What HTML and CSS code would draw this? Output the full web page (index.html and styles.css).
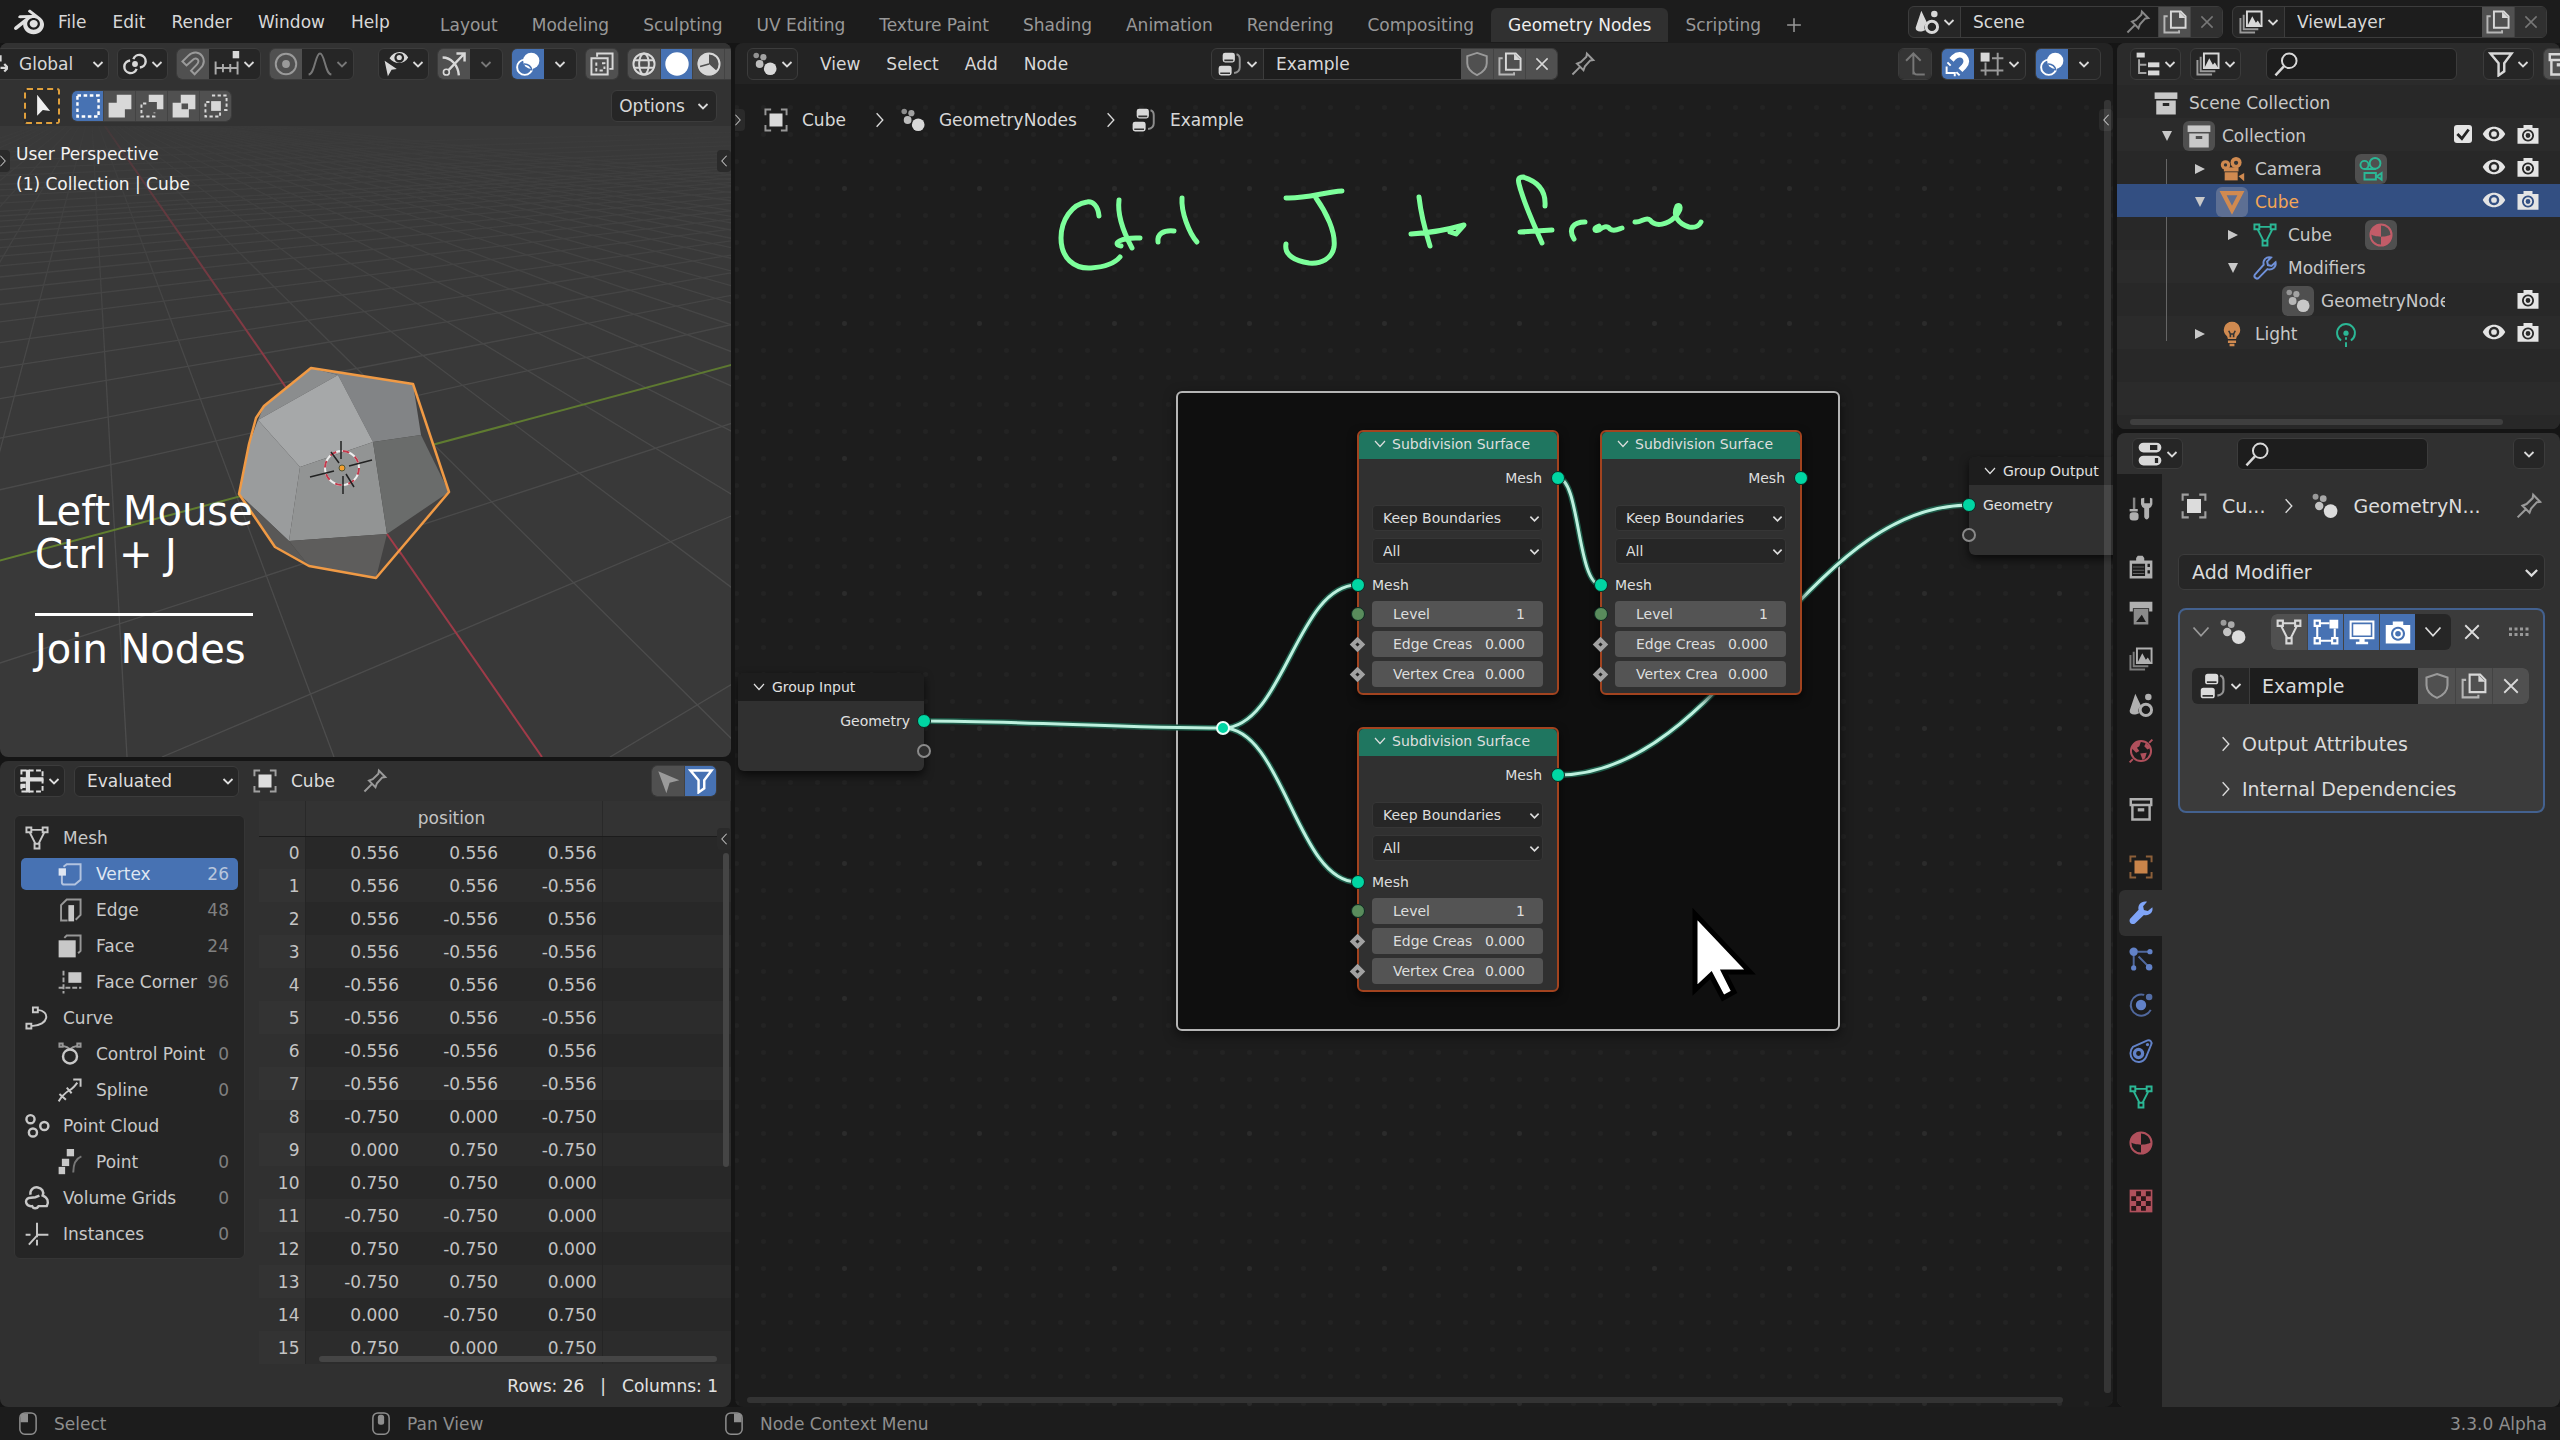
FILE: index.html
```html
<!DOCTYPE html>
<html lang="en">
<head>
<meta charset="utf-8">
<title>Blender</title>
<link rel="stylesheet" href="styles.css">
</head>
<body>
<svg class="defs" aria-hidden="true">
  <symbol id="blender" viewBox="0 0 24 24"><path fill="currentColor" d="M12.51 13.214c.046-.8.438-1.506 1.03-2.006a3.424 3.424 0 0 1 2.212-.79c.85 0 1.631.3 2.211.79.592.5.983 1.206 1.028 2.005.045.823-.285 1.586-.865 2.153a3.389 3.389 0 0 1-2.374.938 3.393 3.393 0 0 1-2.376-.938c-.58-.567-.91-1.33-.865-2.152M7.35 14.831c.006.314.106.922.256 1.398a7.372 7.372 0 0 0 1.593 2.757 8.227 8.227 0 0 0 2.787 2.001 8.947 8.947 0 0 0 3.66.76 8.964 8.964 0 0 0 3.657-.772 8.285 8.285 0 0 0 2.785-2.01 7.428 7.428 0 0 0 1.592-2.762 6.964 6.964 0 0 0 .25-3.074 7.123 7.123 0 0 0-1.016-2.779 7.764 7.764 0 0 0-1.852-2.043h.002L13.566 2.55l-.02-.015c-.492-.378-1.319-.376-1.86.002-.547.382-.609 1.015-.123 1.415l-.001.001 3.126 2.543-9.53.01h-.013c-.788.001-1.545.518-1.695 1.172-.154.665.38 1.217 1.2 1.22V8.9l4.83-.01-8.62 6.617-.034.025c-.813.622-1.075 1.658-.563 2.313.52.667 1.625.668 2.447.004L7.414 14s-.069.52-.063.831zm12.09 1.741c-.97.988-2.326 1.548-3.795 1.55-1.47.004-2.827-.552-3.797-1.538a4.51 4.51 0 0 1-1.036-1.622 4.282 4.282 0 0 1 .282-3.519 4.702 4.702 0 0 1 1.153-1.371c.942-.768 2.141-1.183 3.396-1.185 1.256-.002 2.455.41 3.398 1.175.48.391.87.854 1.152 1.367a4.28 4.28 0 0 1 .522 1.706 4.236 4.236 0 0 1-.239 1.811 4.54 4.54 0 0 1-1.035 1.626"/></symbol>
  <symbol id="chev" viewBox="0 0 12 12"><path class="ln w2" d="M1.500 4l4.500 4.500L10.500 4"/></symbol>
  <symbol id="thin" viewBox="0 0 12 12"><path class="ln" d="M1 3l5 5.500L11 3"/></symbol>
  <symbol id="right" viewBox="0 0 12 16"><path class="ln" d="M3 2l5.500 6L3 14"/></symbol>
  <symbol id="left" viewBox="0 0 12 16"><path class="ln" d="M9 2L3.500 8 9 14"/></symbol>
  <symbol id="geo" viewBox="0 0 16 16"><g fill="currentColor"><circle cx="2.600" cy="2.700" r="1.700" opacity=".6"/><circle cx="7" cy="3.800" r="1.900" opacity=".7"/><circle cx="4.700" cy="8" r="2.400" opacity=".85"/><circle cx="11.200" cy="10.900" r="3.900"/></g></symbol>
  <symbol id="tree" viewBox="0 0 16 16"><rect x="3.500" y="1" width="7.500" height="6" rx="1.500" fill="currentColor"/><rect x="1" y="9" width="8" height="6" rx="1.500" fill="currentColor"/><path d="M4.500 5.800h5.500M2 13.700h6" stroke="#333" fill="none"/><path class="ln" opacity=".6" d="M12 2q2 .5 2 3v5q0 3-3.500 3.500"/></symbol>
  <symbol id="obj" viewBox="0 0 16 16"><rect x="4" y="4" width="8" height="8" fill="currentColor"/><path class="ln" opacity=".65" d="M1.500 5V1.500H5M11 1.500h3.500V5M14.500 11v3.500H11M5 14.500H1.500V11"/></symbol>
  <symbol id="pin" viewBox="0 0 16 16"><path class="ln" d="M1.500 14.500l4.700-4.700M4.300 7.800l4 4 .9-2.400 3.300-3.600 1.800-.2-3.900-4-.3 1.900-3.500 3.400z"/></symbol>
  <symbol id="shield" viewBox="0 0 16 16"><path class="ln" d="M8 1.200l6 2v4.300c0 3.500-2.500 5.700-6 7.300-3.500-1.600-6-3.800-6-7.300V3.200z"/></symbol>
  <symbol id="copy" viewBox="0 0 16 16"><path class="ln" opacity=".75" d="M3.500 4.500H1.500v10h9v-1.500"/><path class="ln" d="M5.500 1.500h6l3 3v7h-9z"/><path fill="currentColor" d="M10.500 1.500l4 4h-4z"/></symbol>
  <symbol id="x" viewBox="0 0 16 16"><path class="ln" d="M3.500 3.500l9 9M12.500 3.500l-9 9"/></symbol>
  <symbol id="plus" viewBox="0 0 16 16"><path class="ln" d="M8 2.500v11M2.500 8h11"/></symbol>
  <symbol id="scene" viewBox="0 0 16 16"><path fill="currentColor" d="M4.500 1L8 8.500C6.500 9.500 6 11.500 6.800 13 4 14.500 1 14 1 11.500z"/><circle cx="12.500" cy="3" r="2" fill="currentColor"/><circle cx="11" cy="11" r="3.500" class="ln w2"/></symbol>
  <symbol id="vlayer" viewBox="0 0 16 16"><path class="ln" d="M5.500 1.500h9v9h-9z"/><path fill="currentColor" d="M6 10l2.800-5.500L11 8.500l1.200-1.500L14 10z"/><path class="ln" opacity=".65" d="M3.500 3.500v9h9M1.500 5.500v9h9"/></symbol>
  <symbol id="link" viewBox="0 0 16 16"><circle cx="8" cy="8" r="1.800" fill="currentColor"/><path class="ln w15" d="M7 5a3.900 3.900 0 1 1 4 5.200M9 11a3.900 3.900 0 1 1-4-5.200"/></symbol>
  <symbol id="magnet" viewBox="0 0 16 16"><path class="ln" d="M1.500 6.500L5 3c3-3 7-2.500 8.700.3 1.700 2.700 1 5.200-1.200 7.400L9 14.300l-2.200-2.200 3.500-3.700c1.200-1.300 1.300-2.600.5-3.300-.9-.8-2-.6-3 .4L4 8.900z"/></symbol>
  <symbol id="magneton" viewBox="0 0 16 16"><path fill="none" stroke="currentColor" stroke-width="3.400" d="M4 5.500l1.500-1.700c2-2 5-2 6.500-.2s1.400 4-.4 6L9.500 11.800"/><path class="ln" d="M1 9.500v4h5v2M1.500 7l2 2M7 13l2 2"/></symbol>
  <symbol id="snapinc" viewBox="0 0 16 16"><rect x="11.500" y="0" width="4" height="4.500" fill="currentColor"/><path class="ln" opacity=".75" d="M1 6.500v8M14.500 6.500v8M5.500 8v5M10 8v5M1 10.500h13.500"/></symbol>
  <symbol id="snapgrid" viewBox="0 0 16 16"><rect x="1" y="1" width="5.500" height="5.500" fill="currentColor"/><path class="ln" opacity=".65" d="M4 7v8M11.500 1v14M8 4.500h7M1 12h14"/></symbol>
  <symbol id="prop" viewBox="0 0 16 16"><circle cx="8" cy="8" r="6.300" class="ln"/><circle cx="8" cy="8" r="2.400" fill="currentColor"/></symbol>
  <symbol id="fall" viewBox="0 0 16 16"><path class="ln" d="M1 14.500C5 14 5 1.500 8 1.500S11 14 15 14.500"/></symbol>
  <symbol id="vis" viewBox="0 0 16 16"><path fill="currentColor" fill-rule="evenodd" d="M4 4.500C7-.5 13-.5 15.500 4 13 8.500 7 8.500 4 4.500zM10 1.200a3 3 0 1 0 .01 0z"/><circle cx="10" cy="4" r="1.600" fill="currentColor"/><path fill="currentColor" d="M1 6l7.500 5-3.200.5L3 15.500z"/></symbol>
  <symbol id="gizmo" viewBox="0 0 16 16"><path class="ln w15" d="M3.500 13L14 2M9.500 1.500h5v5M1 4c5 0 9.500 4.500 10 11"/><circle cx="3.300" cy="13" r="1.800" fill="#4a4a4a" class="lns"/></symbol>
  <symbol id="over" viewBox="0 0 16 16"><circle cx="10" cy="6" r="5" fill="currentColor"/><circle cx="6" cy="10" r="4.700" class="ln"/><path d="M5.500 8a4.700 4.700 0 0 1 5 4" fill="none" stroke="#4772b3"/></symbol>
  <symbol id="xray" viewBox="0 0 16 16"><path class="ln" d="M5 3.500V1.500h9.500V11h-2"/><path class="ln" d="M1.500 4.500h10v10h-10z"/><path class="ln" stroke-dasharray="2 1.500" d="M4.500 7v5h5M8 7.500h1.500V11"/></symbol>
  <symbol id="wire" viewBox="0 0 16 16"><circle cx="8" cy="8" r="6.500" class="ln"/><ellipse cx="8" cy="8" rx="3" ry="6.500" class="ln"/><path class="ln" d="M2 5.700h12M2 10.300h12"/></symbol>
  <symbol id="solid" viewBox="0 0 16 16"><circle cx="8" cy="8" r="7.200" fill="currentColor"/></symbol>
  <symbol id="mat" viewBox="0 0 16 16"><circle cx="8" cy="8" r="6.500" class="ln"/><path fill="currentColor" d="M8 1.500V9C5 9 2.500 8 1.500 7.500 2 4 4.500 1.500 8 1.500zM8 9c3 0 5.500-1 6.500-1.500C14.500 12 11 14.500 8 14.500z"/></symbol>
  <symbol id="shade" viewBox="0 0 16 16"><circle cx="8" cy="8" r="6.500" class="ln"/><path fill="currentColor" d="M8 1.500V8l5 4.500A6.500 6.500 0 0 1 3 12.500 6.500 6.500 0 0 1 8 1.500z"/><path d="M8 8l-5.500 1.500" stroke="#505050"/></symbol>
  <symbol id="s1" viewBox="0 0 16 16"><path class="ln w15" stroke-dasharray="2.200 1.600" d="M1.500 1.500h13v13h-13z"/></symbol>
  <symbol id="s2" viewBox="0 0 16 16"><path fill="currentColor" d="M6 1h9v9h-4v5H1V6h5z"/></symbol>
  <symbol id="s3" viewBox="0 0 16 16"><path fill="currentColor" d="M6 1h9v9h-4V5.500H6z"/><path class="ln" stroke-dasharray="2 1.500" d="M4.500 6.500h-3v8h8V12"/></symbol>
  <symbol id="s4" viewBox="0 0 16 16"><path fill="currentColor" fill-rule="evenodd" d="M6 1h9v9h-4v5H1V6h5zM6.500 6.500v3.500h4V6.500z"/></symbol>
  <symbol id="s5" viewBox="0 0 16 16"><rect x="5" y="5" width="6" height="6" fill="currentColor"/><path class="ln" stroke-dasharray="2 1.500" d="M5.500 1.500h9v9h-3M4 5.500H1.500v9h9V12"/></symbol>
  <symbol id="cursor" viewBox="0 0 16 16"><path fill="currentColor" d="M5 1l8 10-4.500-.5L5 14z"/></symbol>
  <symbol id="arrow" viewBox="0 0 16 16"><path fill="currentColor" d="M2 2l13 5.500-6 1.500-2 6.500z"/></symbol>
  <symbol id="up" viewBox="0 0 16 16"><path class="ln" d="M7 14.500V1.500M2.500 6L7 1.500 11.500 6M7 12q0 2.500 2.500 2.500H14"/></symbol>
  <symbol id="outl" viewBox="0 0 16 16"><g fill="currentColor"><rect x="1" y="1" width="5" height="3"/><rect x="8" y="7" width="7" height="3"/><rect x="8" y="12" width="7" height="3"/></g><path class="ln" opacity=".7" d="M2.500 5v8.500H7M2.500 8.500H7"/></symbol>
  <symbol id="search" viewBox="0 0 16 16"><circle cx="10" cy="6" r="4.500" class="ln"/><path class="ln w15" d="M6.700 9.500L1.500 15"/></symbol>
  <symbol id="filter" viewBox="0 0 16 16"><path class="ln w15" d="M1.500 1.500h13l-4.500 6v5l-3.500 2.500V7.500z"/></symbol>
  <symbol id="coll" viewBox="0 0 16 16"><rect x="1" y="1.500" width="14" height="4" fill="currentColor"/><path fill="currentColor" fill-rule="evenodd" d="M2 6.500h12v8.500H2zM6 8v1.800h4V8z"/></symbol>
  <symbol id="collo" viewBox="0 0 16 16"><path class="ln w15" d="M1.700 2h12.600v3.500H1.700zM2.700 5.500v9h10.600v-9"/><rect x="6" y="7.500" width="4" height="2" fill="currentColor"/></symbol>
  <symbol id="cam" viewBox="0 0 16 16"><g fill="currentColor"><circle cx="4" cy="5.500" r="2.900"/><circle cx="10.500" cy="4" r="3.400"/><rect x="3" y="7" width="9" height="2.500"/><rect x="3.500" y="10" width="8" height="5"/><path d="M12 12.500l3.500-2v5z"/></g><circle cx="4" cy="5.500" r="1" fill="#333"/><circle cx="10.500" cy="4.200" r="1.300" fill="#333"/></symbol>
  <symbol id="camo" viewBox="0 0 16 16"><circle cx="4" cy="5.500" r="2.500" class="ln"/><circle cx="10.500" cy="4.500" r="3.300" class="ln"/><path class="ln" d="M4 8h7M4 10.500h7v4H4zM11.500 12.500l3-2v4z"/></symbol>
  <symbol id="tri" viewBox="0 0 16 16"><path fill="none" stroke="currentColor" stroke-width="2.600" d="M2.500 2.500h11L8 13z"/></symbol>
  <symbol id="mesh" viewBox="0 0 16 16"><path class="ln" d="M1.500 1.500h3v3h-3zM11.500 1.500h3v3h-3zM6.500 11.500h3v3h-3zM4.500 3h7M3.500 4.500l3.500 7M12.500 4.500L9 11.500"/></symbol>
  <symbol id="wrench" viewBox="0 0 16 16"><path class="ln" d="M14.500 4.500l-2.500 2.200-2.200-.5-.5-2.200L11.700 1.500C8.700.8 6.500 3 7.200 6L1.800 12c-1 1.500.7 3.200 2.200 2.200l5.500-5.500c3 .8 5.600-1.400 5-4.200z"/></symbol>
  <symbol id="wrenchf" viewBox="0 0 16 16"><path fill="currentColor" d="M15 4.500l-2.800 2.200-2.400-.5-.5-2.400L11.700 1C8.200.3 5.800 3 6.500 6L1.300 11.500c-1.200 2 1 4.200 3 3l5.500-5.300c3.200.8 5.900-1.500 5.200-4.700z"/></symbol>
  <symbol id="bulb" viewBox="0 0 16 16"><path fill="currentColor" d="M8 .5a5 5 0 0 1 3 9l-.5 1.500h-5L5 9.500a5 5 0 0 1 3-9zM5.500 12h5v1.500h-5zM6.500 14h3v1.500h-3z"/><path d="M6 6l1 2h2l1-2M7 8v2M9 8v2" stroke="#333" fill="none"/></symbol>
  <symbol id="light" viewBox="0 0 16 16"><path class="ln" d="M5 12A5.500 5.500 0 1 1 11 12M8 10v1.500M8 13v3"/><circle cx="8" cy="7.500" r="1.600" fill="currentColor"/></symbol>
  <symbol id="eye" viewBox="0 0 16 16"><path fill="currentColor" fill-rule="evenodd" d="M.5 8C4 1.500 12 1.500 15.500 8 12 14.500 4 14.500.5 8zM8 4.500a3.500 3.500 0 1 0 .01 0z"/><circle cx="8" cy="8" r="1.900" fill="currentColor"/></symbol>
  <symbol id="photo" viewBox="0 0 16 16"><path fill="currentColor" fill-rule="evenodd" d="M5 2h6v2h4v10.500H1V4h4zM8 5a4 4 0 1 0 .01 0z"/><circle cx="8" cy="9" r="2.200" class="ln"/></symbol>
  <symbol id="props" viewBox="0 0 16 16"><path fill="currentColor" fill-rule="evenodd" d="M4 1h8a3 3 0 0 1 0 6H4a3 3 0 0 1 0-6zM8 2.500v3h4.500v-3zM4 9h8a3 3 0 0 1 0 6H4a3 3 0 0 1 0-6zM11 10.500v3h2v-3z"/></symbol>
  <symbol id="tool" viewBox="0 0 16 16"><g fill="currentColor"><rect x="3" y="1" width="1.500" height="7" opacity=".7"/><rect x="1" y="8" width="5" height="1.500"/><rect x="1" y="10" width="5.500" height="5" rx="2"/><path d="M8 1.500v3.500q.5 2 2 2.500V13q1.500 3 3 0V7.500q1.500-.5 2-2.500V1.500l-1.500-.5v3.500h-3.500V1z"/></g></symbol>
  <symbol id="render" viewBox="0 0 16 16"><path fill="currentColor" fill-rule="evenodd" d="M5 2.500l1-1.500h3l1 1.500V4h5v11H1V4h4zM2.500 6v7.500h8V6zM12 6v2h1.500V6zM12 10v2h1.500v-2z"/><path d="M3 8h7M3 10h7M3 12h7" stroke="currentColor" stroke-width=".6" opacity=".5"/></symbol>
  <symbol id="output" viewBox="0 0 16 16"><path fill="currentColor" d="M1 1h14v6h-2V5H3v2H1z"/><path fill="currentColor" fill-rule="evenodd" opacity=".75" d="M3.500 5.500h9V15h-9zM5 13.500h6L8.500 9z"/></symbol>
  <symbol id="world" viewBox="0 0 16 16"><circle cx="8" cy="8" r="6.200" class="ln"/><path class="ln" d="M1 15l2-2M13 3l2-2"/><path fill="currentColor" d="M2 6l3-4h3L7 5 5.500 6l1.500 2-2 1zM7.500 9.500l4-.5-1 3.500-1.500 1zM11 3l3 3-2 1-2-2z"/></symbol>
  <symbol id="part" viewBox="0 0 16 16"><g fill="currentColor"><circle cx="3.500" cy="3.500" r="2.600"/><circle cx="13.500" cy="3.500" r="1.600"/><circle cx="3.500" cy="13.500" r="1.600"/><circle cx="13" cy="13" r="2"/></g><path class="ln" opacity=".75" d="M6 3.500h7M3.500 6v7M6.500 6.500L13 13"/></symbol>
  <symbol id="phys" viewBox="0 0 16 16"><circle cx="8" cy="8" r="3.200" fill="currentColor"/><circle cx="13" cy="3" r="2" fill="currentColor" opacity=".8"/><path class="ln" opacity=".75" d="M10 1.800A6.500 6.500 0 1 0 14 11"/></symbol>
  <symbol id="cons" viewBox="0 0 16 16"><path class="ln" d="M3 5.500l9-4c1.500-.5 3 .8 2.300 2.500L11 12c-2 3.500-6 3.300-8 1.300S1 7.500 3 5.500z"/><circle cx="6.500" cy="9.500" r="2.500" fill="none" stroke="currentColor" stroke-width="2"/><circle cx="12" cy="4" r="1" fill="currentColor"/></symbol>
  <symbol id="tex" viewBox="0 0 16 16"><rect x="1" y="1" width="14" height="14" fill="currentColor"/><path fill="#2a1517" d="M5 2h3v3H5zM11 2h3v3h-3zM2 5h3v3H2zM8 5h3v3H8zM5 8h3v3H5zM11 8h3v3h-3zM2 11h3v3H2zM8 11h3v3H8z"/></symbol>
  <symbol id="edit" viewBox="0 0 16 16"><rect x="10" y="1" width="5" height="5" fill="currentColor"/><path class="ln" d="M1.500 1.500h3v3h-3zM1.500 11.500h3v3h-3zM11.500 11.500h3v3h-3zM4.500 3H10M3 4.500v7M4.500 13h7M13 6v5.500"/></symbol>
  <symbol id="screen" viewBox="0 0 16 16"><path class="ln" d="M1.500 2h13v9.500h-13z"/><path fill="currentColor" d="M3 3.500h10V10H3zM4.500 13.500h7V15h-7zM6.500 12h3v2h-3z"/></symbol>
  <symbol id="grip" viewBox="0 0 20 10"><path stroke="currentColor" stroke-width="3" stroke-dasharray="3 2.500" d="M0 2h20M0 7.500h20" fill="none"/></symbol>
  <symbol id="sheet" viewBox="0 0 16 16"><path class="ln" stroke-dasharray="3 1.500" d="M1.500 1.500h13v13h-13z"/><path stroke="currentColor" stroke-width="2.600" d="M5.500 1v14M1 7h14M1 11h3" fill="none"/></symbol>
  <symbol id="vert" viewBox="0 0 16 16"><path class="ln" opacity=".7" d="M3 8v5q0 1.500 1.500 1.500H11l3.500-3V2H6L4 3.500"/><rect x="1" y="4.500" width="4.500" height="4.500" fill="currentColor"/></symbol>
  <symbol id="edge" viewBox="0 0 16 16"><path class="ln" opacity=".7" d="M6.500 14.500h-4V5L6 1.500h8.500V11l-3 3"/><rect x="7" y="5" width="3.500" height="10" fill="currentColor"/></symbol>
  <symbol id="face" viewBox="0 0 16 16"><path class="ln" opacity=".7" d="M4.500 3l1.500-1.500h8.500V11L13 12.500"/><rect x="1" y="4.500" width="10.500" height="10.500" fill="currentColor"/></symbol>
  <symbol id="corner" viewBox="0 0 16 16"><rect x="7" y="2" width="8" height="6.500" fill="currentColor"/><path class="ln" opacity=".8" stroke-dasharray="3 1.200" d="M4 1v14M1 11.500h14"/></symbol>
  <symbol id="curve" viewBox="0 0 16 16"><path class="ln" d="M1.500 11.500h3v3h-3zM5.500 1.500h3v3h-3zM8.500 3c7.500.5 7.500 9.500-4 10"/></symbol>
  <symbol id="cpoint" viewBox="0 0 16 16"><circle cx="8" cy="9.500" r="4.300" class="ln w15"/><path class="ln" opacity=".7" d="M1.500 1.500h2v2h-2zM12.500 1.500h2v2h-2zM3.500 3q3 .5 4.500 2 1.500-1.500 4.500-2"/></symbol>
  <symbol id="spline" viewBox="0 0 16 16"><path class="ln" d="M1 15l2-3q3-3 5-4t4.500-4.500M10 1.500h4.500V6M1.500 10.500l4 3.500M6 6.500l3 3.500"/></symbol>
  <symbol id="cloud3" viewBox="0 0 16 16"><circle cx="4" cy="3.800" r="2.500" class="ln w15"/><circle cx="5.500" cy="12" r="2.500" class="ln w15"/><circle cx="12.500" cy="8" r="2.500" class="ln w15"/></symbol>
  <symbol id="point" viewBox="0 0 16 16"><g fill="currentColor"><rect x="6" y="0" width="4.500" height="4.500"/><rect x="3" y="6" width="4.500" height="4.500"/><rect x="1" y="11" width="4" height="4.500"/></g><path class="ln" opacity=".5" d="M10 14.500q0-8 5-10"/></symbol>
  <symbol id="volume" viewBox="0 0 16 16"><path class="ln w15" d="M4 6C3.500 3 6 1 8.500 1.500s4 2.500 3 5c3 1 4 4 2.500 6.500H9c-1 2-3.500 1.500-4 0-4 .5-5-4-2-5L7 7.500l2.500-1"/></symbol>
  <symbol id="inst" viewBox="0 0 16 16"><path class="ln" d="M8 1v9M8 8.500h7M1 8.500h3M8 9l-5 5.500M8 11.500V15"/></symbol>
  <symbol id="mleft" viewBox="0 0 16 20"><rect x="1.500" y="1.500" width="13" height="17" rx="4" class="ln"/><path fill="currentColor" d="M2 9V5q0-3 3-3h3v7z"/></symbol>
  <symbol id="mmid" viewBox="0 0 16 20"><rect x="1.500" y="1.500" width="13" height="17" rx="4" class="ln"/><rect x="5.500" y="3" width="5" height="8" rx="2" fill="currentColor"/></symbol>
  <symbol id="mright" viewBox="0 0 16 20"><rect x="1.500" y="1.500" width="13" height="17" rx="4" class="ln"/><path fill="currentColor" d="M14 9V5q0-3-3-3H8v7z"/></symbol>
  <symbol id="orient" viewBox="0 0 16 16"><path class="ln w2" d="M10 1v5M10 11h6M13 8l3 3-3 3"/></symbol>
</svg>

<div class="app">
<header class="topbar">
  <svg class="logo"><use href="#blender"/></svg>
  <nav class="menus">
    <button>File</button><button>Edit</button><button>Render</button><button>Window</button><button>Help</button>
  </nav>
  <nav class="workspaces">
    <button>Layout</button><button>Modeling</button><button>Sculpting</button><button>UV Editing</button><button>Texture Paint</button><button>Shading</button><button>Animation</button><button>Rendering</button><button>Compositing</button><button class="on">Geometry Nodes</button><button>Scripting</button><button aria-label="Add workspace" class="add"><svg class="ico s20"><use href="#plus"/></svg></button>
  </nav>
  <div class="grp idblock">
    <button class="drop" aria-label="Browse scene"><svg class="ico"><use href="#scene"/></svg><svg class="chev"><use href="#chev"/></svg></button>
    <input class="field" aria-label="Scene name" value="Scene">
    <button class="cell plain" aria-label="Pin scene"><svg class="ico"><use href="#pin"/></svg></button>
    <button class="cell" aria-label="New scene"><svg class="ico"><use href="#copy"/></svg></button>
    <button class="cell off" aria-label="Delete scene"><svg class="ico s20"><use href="#x"/></svg></button>
  </div>
  <div class="grp idblock">
    <button class="drop" aria-label="Browse view layer"><svg class="ico"><use href="#vlayer"/></svg><svg class="chev"><use href="#chev"/></svg></button>
    <input class="field" aria-label="View layer name" value="ViewLayer">
    <button class="cell" aria-label="New view layer"><svg class="ico"><use href="#copy"/></svg></button>
    <button class="cell off" aria-label="Delete view layer"><svg class="ico s20"><use href="#x"/></svg></button>
  </div>
</header>

<main class="areas">
<div class="column left">
  <section class="editor view3d">
    <svg class="scene3d" viewBox="0 43 731 714" preserveAspectRatio="xMidYMid slice" aria-hidden="true">
      <defs>
        <linearGradient id="fade" x1="0" y1="110" x2="0" y2="757" gradientUnits="userSpaceOnUse"><stop offset="0" stop-color="#fff" stop-opacity="0"/><stop offset=".1" stop-color="#fff" stop-opacity=".3"/><stop offset=".4" stop-color="#fff" stop-opacity=".8"/><stop offset="1" stop-color="#fff"/></linearGradient>
        <mask id="far" maskUnits="userSpaceOnUse" x="0" y="43" width="731" height="714"><rect y="43" width="731" height="714" fill="url(#fade)"/></mask>
      </defs>
      <g mask="url(#far)" fill="none">
        <path stroke="#4d4d4d" stroke-width="1.300" d="M91 106L-1743 757M91 106L-1535 757M91 106L-1327 757M91 106L-1120 757M91 106L-912 757M91 106L-704 757M91 106L-497 757M91 106L-289 757M91 106L-81 757M91 106L127 757M91 106L334 757M91 106L750 757M91 106L957 757M91 106L1165 757M91 106L1373 757M91 106L1580 757M91 106L1788 757M91 106L1996 757M91 106L2204 757M91 106L2411 757M91 106L2619 757M91 106L2827 757M91 106L3034 757M91 106L3242 757M91 106L3450 757M91 106L3657 757M91 106L3865 757M91 106L4073 757M91 106L4488 757M91 106L4904 757M91 106L5319 757M91 106L5734 757M91 106L6150 757"/>
        <path stroke="#4d4d4d" stroke-width="1.300" d="M1700 106L610 757M1700 106L162 757M1700 106L-287 757M1700 106L-1184 757M1700 106L-1632 757M1700 106L-2081 757M1700 106L-2529 757M1700 106L-2978 757M1700 106L-3426 757M1700 106L-3875 757M1700 106L-4323 757M1700 106L-4772 757M1700 106L-5220 757M1700 106L-5669 757M1700 106L-6117 757M1700 106L-6566 757M1700 106L-7014 757M1700 106L-7463 757M1700 106L-7911 757M1700 106L-8360 757M1700 106L-8808 757M1700 106L-9705 757M1700 106L-10602 757M1700 106L-11499 757M1700 106L-12396 757M1700 106L-14190 757M1700 106L-15984 757M1700 106L-18675 757M1700 106L-22263 757"/>
        <path stroke="#a33b49" stroke-width="2" d="M91 106L542 757"/>
        <path stroke="#67892f" stroke-width="2" d="M1700 106L-735 757"/>
      </g>
      <path fill="#434242" d="M311 368L413 384 449 492 376 578 309 566 275 547 239 494 249 444 256 418 264 406z"/>
      <path fill="#8b8d8e" d="M311 368L338 375 258 420 264 406z"/>
      <path fill="#828486" d="M311 368L413 384 421 435 373 442 338 375z"/>
      <path fill="#a6a8a9" d="M338 375L373 442 300 467 258 420z"/>
      <path fill="#9a9c9d" d="M258 420L300 467 289 541 239 494 249 444z"/>
      <path fill="#929494" d="M300 467L373 442 387 534 289 541z"/>
      <path fill="#6a6c6b" d="M373 442L421 435 449 492 387 534z"/>
      <path fill="#5e5d5c" d="M289 541L387 534 376 578 309 566z"/>
      <path fill="#595857" d="M239 494L289 541 309 566 275 547z"/>
      <path stroke="#a33b49" stroke-width="2" d="M387 534L401 554"/>
      <path fill="none" stroke="#f09a45" stroke-width="2.500" stroke-linejoin="round" d="M311 368L413 384 449 492 376 578 309 566 275 547 239 494 249 444 256 418 264 406z"/>
      <circle cx="342" cy="468" r="17" fill="none" stroke="#eee" stroke-width="2"/>
      <circle cx="342" cy="468" r="17" fill="none" stroke="#c23a4c" stroke-width="2" stroke-dasharray="6.700 6.700"/>
      <path stroke="#222" stroke-width="1.500" d="M341 441v18M343 476v18M310 477l24-6M349 466l23-6M331 452l8 11M346 474l8 13"/>
      <circle cx="342" cy="468" r="3" fill="#f5a030" stroke="#553"/>
    </svg>
    <div class="header h3d">
      <label class="orient"><svg class="ico s20"><use href="#orient"/></svg><select aria-label="Transform orientation"><option>Global</option></select></label>
      <button class="btn" aria-label="Pivot point"><svg class="ico"><use href="#link"/></svg><svg class="chev"><use href="#chev"/></svg></button>
      <div class="grp"><button class="cell dim" aria-label="Snap"><svg class="ico"><use href="#magnet"/></svg></button><button class="drop" aria-label="Snapping"><svg class="ico"><use href="#snapinc"/></svg><svg class="chev"><use href="#chev"/></svg></button></div>
      <div class="grp"><button class="cell dim" aria-label="Proportional editing"><svg class="ico"><use href="#prop"/></svg></button><button class="drop faint" aria-label="Falloff"><svg class="ico"><use href="#fall"/></svg><svg class="chev"><use href="#chev"/></svg></button></div>
      <button class="btn away" aria-label="Visibility"><svg class="ico"><use href="#vis"/></svg><svg class="chev"><use href="#chev"/></svg></button>
      <div class="grp"><button class="cell" aria-label="Gizmos"><svg class="ico"><use href="#gizmo"/></svg></button><button class="drop thin faint" aria-label="Gizmo options"><svg class="chev"><use href="#chev"/></svg></button></div>
      <div class="grp"><button class="cell blue" aria-label="Overlays"><svg class="ico"><use href="#over"/></svg></button><button class="drop thin" aria-label="Overlay options"><svg class="chev"><use href="#chev"/></svg></button></div>
      <div class="grp"><button class="cell" aria-label="X-ray"><svg class="ico"><use href="#xray"/></svg></button></div>
      <div class="grp"><button class="cell" aria-label="Wireframe"><svg class="ico"><use href="#wire"/></svg></button><button class="cell blue" aria-label="Solid"><svg class="ico"><use href="#solid"/></svg></button><button class="cell" aria-label="Material preview"><svg class="ico"><use href="#shade"/></svg></button><button class="cell" aria-label="Rendered"></button></div>
    </div>
    <div class="header toolrow">
      <button class="tool" aria-label="Select box"><svg class="ico"><use href="#cursor"/></svg></button>
      <div class="grp"><button class="cell blue" aria-label="Set"><svg class="ico"><use href="#s1"/></svg></button><button class="cell" aria-label="Extend"><svg class="ico"><use href="#s2"/></svg></button><button class="cell" aria-label="Subtract"><svg class="ico"><use href="#s3"/></svg></button><button class="cell" aria-label="Invert"><svg class="ico"><use href="#s4"/></svg></button><button class="cell" aria-label="Intersect"><svg class="ico"><use href="#s5"/></svg></button></div>
      <button class="btn options">Options <svg class="chev"><use href="#chev"/></svg></button>
    </div>
    <p class="viewinfo">User Perspective<br>(1) Collection | Cube</p>
    <svg class="toggle tl"><use href="#right"/></svg>
    <svg class="toggle tr"><use href="#left"/></svg>
    <div class="keys"><p>Left Mouse<br>Ctrl + J</p><p class="op">Join Nodes</p></div>
  </section>

  <section class="editor sheet">
    <div class="header hsheet">
      <button class="btn" aria-label="Editor type"><svg class="ico"><use href="#sheet"/></svg><svg class="chev"><use href="#chev"/></svg></button>
      <select class="evalsel" aria-label="Object evaluation state"><option>Evaluated</option></select>
      <svg class="ico gap-s"><use href="#obj"/></svg><span class="gap-s">Cube</span>
      <svg class="ico dim gap-m"><use href="#pin"/></svg>
      <div class="grp push"><button class="cell dim" aria-label="Selected only"><svg class="ico"><use href="#arrow"/></svg></button><button class="cell blue" aria-label="Use filter"><svg class="ico"><use href="#filter"/></svg></button></div>
    </div>
    <div class="sheetbody">
      <ul class="domains">
        <li><svg class="ico"><use href="#mesh"/></svg><span>Mesh</span></li>
        <li class="sub on"><svg class="ico"><use href="#vert"/></svg><span>Vertex</span><b>26</b></li>
        <li class="sub"><svg class="ico"><use href="#edge"/></svg><span>Edge</span><b>48</b></li>
        <li class="sub"><svg class="ico"><use href="#face"/></svg><span>Face</span><b>24</b></li>
        <li class="sub"><svg class="ico"><use href="#corner"/></svg><span>Face Corner</span><b>96</b></li>
        <li><svg class="ico"><use href="#curve"/></svg><span>Curve</span></li>
        <li class="sub"><svg class="ico"><use href="#cpoint"/></svg><span>Control Point</span><b>0</b></li>
        <li class="sub"><svg class="ico"><use href="#spline"/></svg><span>Spline</span><b>0</b></li>
        <li><svg class="ico"><use href="#cloud3"/></svg><span>Point Cloud</span></li>
        <li class="sub"><svg class="ico"><use href="#point"/></svg><span>Point</span><b>0</b></li>
        <li><svg class="ico"><use href="#volume"/></svg><span>Volume Grids</span><b>0</b></li>
        <li><svg class="ico"><use href="#inst"/></svg><span>Instances</span><b>0</b></li>
      </ul>
      <div class="tablewrap">
      <table>
        <colgroup><col class="c0"><col class="c1"><col class="c1"><col class="c1"><col></colgroup>
        <thead><tr><th></th><th colspan="3" scope="colgroup">position</th><th></th></tr></thead>
        <tbody>
        <tr><th scope="row">0</th><td>0.556</td><td>0.556</td><td>0.556</td><td></td></tr>
        <tr><th scope="row">1</th><td>0.556</td><td>0.556</td><td>-0.556</td><td></td></tr>
        <tr><th scope="row">2</th><td>0.556</td><td>-0.556</td><td>0.556</td><td></td></tr>
        <tr><th scope="row">3</th><td>0.556</td><td>-0.556</td><td>-0.556</td><td></td></tr>
        <tr><th scope="row">4</th><td>-0.556</td><td>0.556</td><td>0.556</td><td></td></tr>
        <tr><th scope="row">5</th><td>-0.556</td><td>0.556</td><td>-0.556</td><td></td></tr>
        <tr><th scope="row">6</th><td>-0.556</td><td>-0.556</td><td>0.556</td><td></td></tr>
        <tr><th scope="row">7</th><td>-0.556</td><td>-0.556</td><td>-0.556</td><td></td></tr>
        <tr><th scope="row">8</th><td>-0.750</td><td>0.000</td><td>-0.750</td><td></td></tr>
        <tr><th scope="row">9</th><td>0.000</td><td>0.750</td><td>-0.750</td><td></td></tr>
        <tr><th scope="row">10</th><td>0.750</td><td>0.750</td><td>0.000</td><td></td></tr>
        <tr><th scope="row">11</th><td>-0.750</td><td>-0.750</td><td>0.000</td><td></td></tr>
        <tr><th scope="row">12</th><td>0.750</td><td>-0.750</td><td>0.000</td><td></td></tr>
        <tr><th scope="row">13</th><td>-0.750</td><td>0.750</td><td>0.000</td><td></td></tr>
        <tr><th scope="row">14</th><td>0.000</td><td>-0.750</td><td>0.750</td><td></td></tr>
        <tr><th scope="row">15</th><td>0.750</td><td>0.000</td><td>0.750</td><td></td></tr>
        </tbody>
      </table>
      <i class="bar sh"></i><i class="bar sv"></i>
      <svg class="toggle tt"><use href="#left"/></svg>
      </div>
    </div>
    <footer class="counts"><span>Rows: 26</span><span>|</span><span>Columns: 1</span></footer>
  </section>
</div>

<section class="editor nodes">
  <div class="header hnode">
    <button class="btn" aria-label="Editor type"><svg class="ico"><use href="#geo"/></svg><svg class="chev"><use href="#chev"/></svg></button>
    <nav class="menus nm"><button>View</button><button>Select</button><button>Add</button><button>Node</button></nav>
    <div class="grp idblock nid">
      <button class="drop" aria-label="Browse node tree"><svg class="ico"><use href="#tree"/></svg><svg class="chev"><use href="#chev"/></svg></button>
      <input class="field" aria-label="Node tree name" value="Example">
      <button class="cell dim" aria-label="Fake user"><svg class="ico"><use href="#shield"/></svg></button><button class="cell" aria-label="Duplicate"><svg class="ico"><use href="#copy"/></svg></button><button class="cell" aria-label="Unlink"><svg class="ico s20"><use href="#x"/></svg></button>
    </div>
    <button class="bare dim" aria-label="Pin"><svg class="ico"><use href="#pin"/></svg></button>
    <div class="grp push"><button class="cell half" aria-label="Parent node tree"><svg class="ico"><use href="#up"/></svg></button></div>
    <div class="grp"><button class="cell blue" aria-label="Snap"><svg class="ico"><use href="#magneton"/></svg></button><button class="drop" aria-label="Snap target"><svg class="ico"><use href="#snapgrid"/></svg><svg class="chev"><use href="#chev"/></svg></button></div>
    <div class="grp"><button class="cell blue" aria-label="Overlays"><svg class="ico"><use href="#over"/></svg></button><button class="drop thin" aria-label="Overlay options"><svg class="chev"><use href="#chev"/></svg></button></div>
  </div>
  <div class="canvas">
    <nav class="path" aria-label="Tree path">
      <svg class="ico"><use href="#obj"/></svg><span>Cube</span><svg class="sep"><use href="#right"/></svg>
      <svg class="ico"><use href="#geo"/></svg><span>GeometryNodes</span><svg class="sep"><use href="#right"/></svg>
      <svg class="ico"><use href="#tree"/></svg><span>Example</span>
    </nav>
    <div class="frame"></div>
    <svg class="links" aria-hidden="true"><g transform="translate(-735 -84)" fill="none" stroke-linecap="round">
      <path stroke="#1d5a48" stroke-width="6" d="M923 721C1023 721 1123 728 1223 728C1283 728 1297 585 1357 585M1223 728C1283 728 1297 882 1357 882M1558 478C1580 478 1577 585 1601 585M1558 775C1723 775 1804 505 1969 505"/>
      <path stroke="#bdf0de" stroke-width="3" d="M923 721C1023 721 1123 728 1223 728C1283 728 1297 585 1357 585M1223 728C1283 728 1297 882 1357 882M1558 478C1580 478 1577 585 1601 585M1558 775C1723 775 1804 505 1969 505"/>
      <circle cx="1223" cy="728" r="6" fill="#00d6a3" stroke="#e8fff8" stroke-width="2"/>
      <g stroke="#7dff9b" stroke-width="5" stroke-linejoin="round">
        <path d="M1099 216C1098 206 1093 201 1087 202C1072 204 1061 220 1061 238C1061 258 1074 269 1091 268C1104 267 1115 263 1120 257"/>
        <path d="M1119 200C1117 216 1125 235 1132 248M1121 246C1111 244 1121 237 1140 238M1158 242C1157 234 1163 230 1174 231M1182 198C1181 212 1189 233 1197 242"/>
        <path d="M1286 198C1305 199 1325 192 1342 191M1316 198C1326 212 1336 232 1334 247C1332 259 1321 264 1309 263C1295 261 1284 255 1286 244"/>
        <path d="M1419 197C1421 215 1425 230 1430 246M1411 234C1430 233 1450 229 1464 225L1456 234L1450 232"/>
        <path d="M1545 206C1546 192 1540 182 1523 177C1518 177 1518 180 1519 184C1524 204 1534 225 1542 243M1520 232L1552 230M1574 239C1568 229 1573 222 1585 222"/>
        <path d="M1599 226C1593 228 1594 232 1599 230C1603 227 1607 225 1610 229C1614 232 1619 229 1622 228M1635 222C1641 223 1646 216 1650 220C1656 228 1668 224 1675 217C1683 208 1680 204 1677 206C1672 216 1679 224 1689 227C1695 228 1699 226 1701 222"/>
      </g>
    </g></svg>

    <article class="node io gin">
      <h3><svg class="chev"><use href="#thin"/></svg>Group Input</h3>
      <div class="out">Geometry<i class="sock geo"></i></div>
      <div class="out"><i class="sock virt"></i></div>
    </article>
    <article class="node io gout">
      <h3><svg class="chev"><use href="#thin"/></svg>Group Output</h3>
      <div class="in">Geometry<i class="sock geo"></i></div>
      <div class="in"><i class="sock virt"></i></div>
    </article>

    <article class="node sub n1">
      <h3><svg class="chev"><use href="#thin"/></svg>Subdivision Surface</h3>
      <div class="out">Mesh<i class="sock geo"></i></div>
      <select aria-label="UV smooth"><option>Keep Boundaries</option></select>
      <select aria-label="Boundary smooth"><option>All</option></select>
      <div class="in">Mesh<i class="sock geo"></i></div>
      <label class="num"><i class="sock int"></i><span>Level</span><input value="1"></label>
      <label class="num"><i class="sock fl"></i><span>Edge Creas</span><input value="0.000"></label>
      <label class="num"><i class="sock fl"></i><span>Vertex Crea</span><input value="0.000"></label>
    </article>
    <article class="node sub n2">
      <h3><svg class="chev"><use href="#thin"/></svg>Subdivision Surface</h3>
      <div class="out">Mesh<i class="sock geo"></i></div>
      <select aria-label="UV smooth"><option>Keep Boundaries</option></select>
      <select aria-label="Boundary smooth"><option>All</option></select>
      <div class="in">Mesh<i class="sock geo"></i></div>
      <label class="num"><i class="sock int"></i><span>Level</span><input value="1"></label>
      <label class="num"><i class="sock fl"></i><span>Edge Creas</span><input value="0.000"></label>
      <label class="num"><i class="sock fl"></i><span>Vertex Crea</span><input value="0.000"></label>
    </article>
    <article class="node sub n3">
      <h3><svg class="chev"><use href="#thin"/></svg>Subdivision Surface</h3>
      <div class="out">Mesh<i class="sock geo"></i></div>
      <select aria-label="UV smooth"><option>Keep Boundaries</option></select>
      <select aria-label="Boundary smooth"><option>All</option></select>
      <div class="in">Mesh<i class="sock geo"></i></div>
      <label class="num"><i class="sock int"></i><span>Level</span><input value="1"></label>
      <label class="num"><i class="sock fl"></i><span>Edge Creas</span><input value="0.000"></label>
      <label class="num"><i class="sock fl"></i><span>Vertex Crea</span><input value="0.000"></label>
    </article>
    <svg class="pointer" viewBox="0 0 66 92" aria-hidden="true"><path fill="#fff" stroke="#000" stroke-width="5" d="M4 6V82L20 67 32 90 43 84 33 64H59z"/></svg>
    <svg class="toggle tl"><use href="#right"/></svg>
    <svg class="toggle tc"><use href="#left"/></svg>
    <i class="bar nh"></i><i class="bar nv"></i>
  </div>
</section>

<div class="column right">
  <section class="editor outliner">
    <div class="header hout">
      <button class="btn" aria-label="Editor type"><svg class="ico"><use href="#outl"/></svg><svg class="chev"><use href="#chev"/></svg></button>
      <button class="btn" aria-label="Display mode"><svg class="ico"><use href="#vlayer"/></svg><svg class="chev"><use href="#chev"/></svg></button>
      <label class="search"><svg class="ico"><use href="#search"/></svg><input type="search" aria-label="Filter outliner"></label>
      <button class="btn" aria-label="Filter"><svg class="ico"><use href="#filter"/></svg><svg class="chev"><use href="#chev"/></svg></button>
      <div class="grp"><button class="cell" aria-label="New collection"><svg class="ico"><use href="#collo"/></svg></button></div>
    </div>
    <ul class="tree">
      <li class="d1"><span class="slot"><svg class="ico"><use href="#coll"/></svg></span><span>Scene Collection</span></li>
      <li class="d1"><i class="tw open"></i><span class="slot chip"><svg class="ico"><use href="#coll"/></svg></span><span>Collection</span><span class="flags"><input type="checkbox" checked aria-label="Include collection"><svg class="ico"><use href="#eye"/></svg><svg class="ico"><use href="#photo"/></svg></span></li>
      <li class="d2"><i class="tw"></i><span class="slot orange"><svg class="ico"><use href="#cam"/></svg></span><span>Camera</span><span class="slot chip teal ex"><svg class="ico"><use href="#camo"/></svg></span><span class="flags"><svg class="ico"><use href="#eye"/></svg><svg class="ico"><use href="#photo"/></svg></span></li>
      <li class="d2 active"><i class="tw open"></i><span class="slot chip orange"><svg class="ico"><use href="#tri"/></svg></span><span>Cube</span><span class="flags"><svg class="ico"><use href="#eye"/></svg><svg class="ico"><use href="#photo"/></svg></span></li>
      <li class="d3"><i class="tw"></i><span class="slot teal"><svg class="ico"><use href="#mesh"/></svg></span><span>Cube</span><span class="slot chip red ex"><svg class="ico"><use href="#mat"/></svg></span></li>
      <li class="d3"><i class="tw open"></i><span class="slot blueish"><svg class="ico"><use href="#wrench"/></svg></span><span>Modifiers</span></li>
      <li class="d5"><span class="slot chip"><svg class="ico"><use href="#geo"/></svg></span><span class="clip">GeometryNodes</span><span class="flags"><svg class="ico"><use href="#photo"/></svg></span></li>
      <li class="d2"><i class="tw"></i><span class="slot orange"><svg class="ico"><use href="#bulb"/></svg></span><span>Light</span><span class="slot teal ex"><svg class="ico"><use href="#light"/></svg></span><span class="flags"><svg class="ico"><use href="#eye"/></svg><svg class="ico"><use href="#photo"/></svg></span></li>
    </ul>
    <i class="bar oh"></i>
  </section>

  <section class="editor props">
    <div class="header hprop">
      <button class="btn" aria-label="Editor type"><svg class="ico"><use href="#props"/></svg><svg class="chev"><use href="#chev"/></svg></button>
      <label class="search"><svg class="ico"><use href="#search"/></svg><input type="search" aria-label="Search properties"></label>
      <button class="btn sq" aria-label="Options"><svg class="chev"><use href="#chev"/></svg></button>
    </div>
    <div class="propbody">
      <nav class="tabs">
        <button aria-label="Tool"><svg class="ico"><use href="#tool"/></svg></button>
        <button class="sp" aria-label="Render"><svg class="ico"><use href="#render"/></svg></button>
        <button aria-label="Output"><svg class="ico"><use href="#output"/></svg></button>
        <button aria-label="View layer"><svg class="ico"><use href="#vlayer"/></svg></button>
        <button aria-label="Scene"><svg class="ico"><use href="#scene"/></svg></button>
        <button class="red" aria-label="World"><svg class="ico"><use href="#world"/></svg></button>
        <button class="sp" aria-label="Collection"><svg class="ico"><use href="#collo"/></svg></button>
        <button class="sp orange" aria-label="Object"><svg class="ico"><use href="#obj"/></svg></button>
        <button class="on" aria-label="Modifiers"><svg class="ico"><use href="#wrenchf"/></svg></button>
        <button class="blueish" aria-label="Particles"><svg class="ico"><use href="#part"/></svg></button>
        <button class="blueish" aria-label="Physics"><svg class="ico"><use href="#phys"/></svg></button>
        <button class="blueish" aria-label="Constraints"><svg class="ico"><use href="#cons"/></svg></button>
        <button class="teal" aria-label="Data"><svg class="ico"><use href="#mesh"/></svg></button>
        <button class="red" aria-label="Material"><svg class="ico"><use href="#mat"/></svg></button>
        <button class="sp red" aria-label="Texture"><svg class="ico"><use href="#tex"/></svg></button>
      </nav>
      <div class="content">
        <div class="crumbs"><svg class="ico"><use href="#obj"/></svg><span>Cu...</span><svg class="sep"><use href="#right"/></svg><svg class="ico"><use href="#geo"/></svg><span>GeometryN...</span><button class="bare dim push" aria-label="Pin"><svg class="ico"><use href="#pin"/></svg></button></div>
        <button class="btn addmod">Add Modifier<svg class="chev"><use href="#chev"/></svg></button>
        <div class="panel">
          <div class="prow">
            <svg class="bigchev dim"><use href="#thin"/></svg><svg class="ico"><use href="#geo"/></svg>
            <div class="grp"><button class="cell" aria-label="On cage"><svg class="ico"><use href="#mesh"/></svg></button><button class="cell blue" aria-label="Edit mode"><svg class="ico"><use href="#edit"/></svg></button><button class="cell blue" aria-label="Realtime"><svg class="ico"><use href="#screen"/></svg></button><button class="cell blue" aria-label="Render"><svg class="ico"><use href="#photo"/></svg></button><button class="drop" aria-label="More"><svg class="bigchev"><use href="#thin"/></svg></button></div>
            <button class="bare" aria-label="Remove"><svg class="ico s24"><use href="#x"/></svg></button>
            <svg class="grip"><use href="#grip"/></svg>
          </div>
          <div class="grp idblock">
            <button class="drop" aria-label="Browse node group"><svg class="ico"><use href="#tree"/></svg><svg class="chev"><use href="#chev"/></svg></button>
            <input class="field" aria-label="Node group name" value="Example">
            <button class="cell dim" aria-label="Fake user"><svg class="ico"><use href="#shield"/></svg></button><button class="cell" aria-label="Duplicate"><svg class="ico"><use href="#copy"/></svg></button><button class="cell" aria-label="Unlink"><svg class="ico s24"><use href="#x"/></svg></button>
          </div>
          <button class="fold first"><svg class="sep"><use href="#right"/></svg>Output Attributes</button>
          <button class="fold"><svg class="sep"><use href="#right"/></svg>Internal Dependencies</button>
        </div>
      </div>
    </div>
  </section>
</div>
</main>

<footer class="status">
  <span><svg><use href="#mleft"/></svg>Select</span>
  <span><svg><use href="#mmid"/></svg>Pan View</span>
  <span><svg><use href="#mright"/></svg>Node Context Menu</span>
  <span class="ver">3.3.0 Alpha</span>
</footer>
</div>
</body>
</html>
```
FILE: styles.css
```css
* { box-sizing: border-box; }
body { margin: 0; background: #151515; color: #d8d8d8; font: 17px/24px "DejaVu Sans", sans-serif; }
button, input, select { font: inherit; color: inherit; background: none; border: 0; padding: 0; margin: 0; border-radius: 0; outline: 0; }
p, h3, ul { margin: 0; padding: 0; list-style: none; font-weight: 400; }
.defs { position: absolute; width: 0; height: 0; }
.ln { fill: none; stroke: currentColor; stroke-width: 1.2; }
.lns { stroke: currentColor; }
.w15 { stroke-width: 1.5; }
.w2 { stroke-width: 1.8; }
.ico { width: 26px; height: 26px; flex: none; display: block; }
.s20 { width: 20px; height: 20px; }
.s24 { width: 24px; height: 24px; }
.chev { width: 12px; height: 12px; flex: none; display: block; }
.bigchev { width: 18px; height: 18px; flex: none; }
.sep { width: 14px; height: 18px; flex: none; }
.dim { color: #9a9a9a; }
.orange { color: #d08a50; }
.teal { color: #2bb795; }
.red { color: #c25c68; }
.blueish { color: #6f90d8; }
.push { margin-left: auto; }

.app { display: flex; flex-direction: column; height: 100vh; overflow: hidden; }
.topbar { display: flex; align-items: center; height: 43px; flex: none; background: #1c1c1c; padding: 0 13px 0 14px; }
.logo { width: 30px; height: 30px; margin-right: 14px; color: #e0e0e0; }
.menus { display: flex; gap: 26px; }
.topbar .menus { width: 348px; }
.workspaces { display: flex; align-self: flex-end; flex: 1; height: 35px; padding: 0 0 1px 17px; color: #989898; }
.workspaces button { padding: 0 17px; white-space: nowrap; border-radius: 6px 6px 0 0; }
.workspaces .on { background: #303030; color: #eee; }
.workspaces .add { padding: 0 6px; }
.topbar .idblock { width: 315px; margin-left: 9px; flex: none; }

.grp { display: flex; height: 32px; border-radius: 6px; overflow: hidden; border: 1px solid #3c3c3c; background: #262626; flex: none; }
.cell { width: 32px; background: #505050; display: flex; align-items: center; justify-content: center; flex: none; color: #d8d8d8; }
.cell + .cell { border-left: 1px solid #434343; }
.cell.dim { color: #9a9a9a; }
.cell.blue { background: #4772b3; color: #fff; }
.cell.off { background: #303030; color: #777; }
.cell.plain { background: #1d1d1d; color: #888; width: 36px; padding-right: 4px; }
.cell.half { background: #353535; color: #777; }
.drop { width: 51px; display: flex; align-items: center; justify-content: center; gap: 3px; flex: none; }
.drop.thin { width: 32px; }
.faint { color: #777; }
.field { flex: 1; min-width: 0; background: #1d1d1d; border-left: 1px solid #3c3c3c; padding: 0 12px; height: 100%; }
.btn { height: 32px; border: 1px solid #3c3c3c; border-radius: 6px; background: #262626; display: flex; align-items: center; justify-content: center; gap: 3px; width: 51px; flex: none; }
.bare { display: flex; }
select { appearance: none; background: #262626 url("data:image/svg+xml,%3Csvg xmlns='http://www.w3.org/2000/svg' viewBox='0 0 12 12'%3E%3Cpath d='M1.500 4l4.500 4.500L10.500 4' fill='none' stroke='%23ddd' stroke-width='1.800'/%3E%3C/svg%3E") no-repeat right 4px center / 12px; border: 1px solid #3c3c3c; border-radius: 6px; }

.areas { flex: 1; min-height: 0; display: grid; grid-template-columns: minmax(0, 731fr) minmax(0, 1378fr) minmax(0, 443fr); gap: 4px; }
.column { display: grid; gap: 4px; min-height: 0; min-width: 0; }
.left { grid-template-rows: minmax(0, 714fr) minmax(0, 646fr); }
.right { grid-template-rows: minmax(0, 386fr) minmax(0, 974fr); }
.editor { position: relative; overflow: hidden; border-radius: 8px; background: #303030; display: flex; flex-direction: column; min-width: 0; min-height: 0; }
.header { display: flex; align-items: center; height: 42px; flex: none; position: relative; }
.toggle { position: absolute; width: 14px; height: 22px; padding: 4px 1px; background: #2a2a2a; border-radius: 4px; color: #bbb; }
.toggle.tl { left: -4px; }
.bar { position: absolute; background: #454545; border-radius: 3px; }

/* 3D viewport */
.view3d { background: #393939; }
.scene3d { position: absolute; inset: 0; width: 100%; height: 100%; }
.h3d, .toolrow { background: #323232f5; }
.h3d { gap: 8px; overflow: hidden; }
.orient { display: flex; align-items: center; width: 109px; height: 32px; flex: none; border: 1px solid #3c3c3c; border-left: 0; border-radius: 0 6px 6px 0; background: #262626; overflow: hidden; }
.orient .ico { margin-left: -12px; }
.orient select { flex: 1; border: 0; padding-left: 11px; }
.away { margin-left: 16px; }
.toolrow { height: 41px; padding: 0 14px 0 24px; gap: 11px; }
.toolrow .cell { width: 31px; }
.toolrow .cell + .cell { width: 32px; }
.tool { width: 36px; height: 36px; border: 2px dashed #e0a03c; display: flex; align-items: center; justify-content: center; border-radius: 3px; color: #eee; background: #2b2b2b; }
.options { width: 106px; margin-left: auto; gap: 12px; }
.viewinfo { position: relative; padding: 13px 16px; line-height: 30px; color: #f2f2f2; }
.view3d .tl { top: 107px; }
.view3d .tr { top: 107px; right: 0; }
.keys { position: absolute; left: 35px; bottom: 86px; font-size: 40px; line-height: 43px; color: #fff; }
.op { margin-top: 37px; padding-top: 12px; border-top: 3px solid #fff; }

/* Spreadsheet */
.hsheet { padding: 0 14px; height: 40px; gap: 9px; color: #ddd; }
.evalsel { width: 165px; height: 31px; padding-left: 12px; }
.gap-s { margin-left: 4px; }
.gap-m { margin-left: 18px; }
.sheetbody { flex: 1; min-height: 0; display: flex; gap: 14px; padding-left: 14px; overflow: hidden; }
.domains { width: 231px; flex: none; align-self: flex-start; margin-top: 14px; padding: 4px 6px; background: #252525; border: 1px solid #353535; border-radius: 6px; }
.domains li { display: flex; align-items: center; height: 32px; margin: 2px 0 4px; padding: 0 9px 0 3px; border-radius: 5px; color: #c8c8c8; white-space: nowrap; }
.domains span { margin-left: 13px; }
.domains .sub { padding-left: 36px; }
.domains .on { background: #4772b3; color: #dfe6f2; }
.domains b { margin-left: auto; font-weight: 400; color: #808080; }
.domains .on b { color: #b9c6dc; }
.tablewrap { position: relative; flex: 1; min-width: 0; overflow: hidden; }
table { border-collapse: collapse; table-layout: fixed; width: 100%; color: #c4c4c4; }
.c0 { width: 46px; }
.c1 { width: 99px; }
th { font-weight: 400; }
thead th { height: 35px; background: #333; border-right: 1px solid #292929; border-bottom: 1px solid #1c1c1c; padding: 0 4px 0 0; }
tbody th, td { height: 33px; padding: 0 5px 0 0; text-align: right; }
tbody th { background: #333; border-right: 1px solid #252525; }
tbody tr { background: #2c2c2c; }
tbody tr:nth-child(odd) { background: #282828; }
tbody tr:nth-child(odd) th { background: #303030; }
td:nth-child(4) { border-right: 1px solid #252525; }
.sh { left: 60px; right: 14px; bottom: 3px; height: 6px; }
.sv { right: 2px; top: 52px; width: 6px; height: 314px; }
.tt { right: 0; top: 27px; }
.counts { height: 42px; flex: none; display: flex; align-items: center; justify-content: flex-end; gap: 16px; padding-right: 13px; color: #e2e2e2; }

/* Node editor */
.nodes { background: #1d1d1d; }
.hnode { background: #232323; padding: 0 12px; height: 41px; gap: 9px; }
.nm { margin-left: 13px; width: 382px; }
.nid { width: 347px; margin-right: 3px; }
.canvas { position: relative; flex: 1; overflow: hidden; background:
  radial-gradient(circle 3px, #2b2b2b 60%, transparent) 42px 37px / 135px 135px,
  radial-gradient(circle 3px, #232323 60%, transparent) 15px 10px / 27px 27px; }
.path { display: flex; align-items: center; height: 72px; padding-left: 28px; gap: 13px; }
.path .sep { margin: 0 3px 0 14px; }
.path .sep + .ico { margin-left: -3px; }
.links { position: absolute; inset: 0; width: 100%; height: 100%; }
.frame { position: absolute; left: 441px; top: 307px; width: 664px; height: 640px; background: #0f0f0f; border: 2px solid #b5b5b5; border-radius: 6px; box-shadow: 0 4px 12px #0008; }
.node { position: absolute; width: 202px; border-radius: 6px; background: #303030; font-size: 14px; line-height: 20px; color: #dedede; box-shadow: 0 4px 10px #000a; }
.node h3 { display: flex; align-items: center; gap: 7px; height: 28px; font-size: 14px; border-radius: 5px 5px 0 0; background: #1d1d1d; padding-left: 15px; }
.node .chev { width: 12px; height: 12px; }
.io { width: 186px; height: 98px; color: #e0e0e0; }
.io > div { height: 30px; }
.io h3 + div { margin-top: 5px; }
.gin { left: 3px; top: 589px; }
.gout { left: 1234px; top: 373px; }
.in, .out { position: relative; display: flex; align-items: center; height: 20px; padding: 0 14px; }
.out { justify-content: flex-end; }
.sub.node { border: 2px solid #a2431f; padding-bottom: 6px; display: flex; flex-direction: column; }
.sub h3 { background: #1f7660; height: 27px; padding-bottom: 4px; gap: 6px; flex: none; }
.sub .out { margin: 9px 0 17px; padding: 0 15px; }
.sub .in { margin: 4px 0 6px; padding: 0 13px; }
.sub select { height: 26px; margin: 0 14px 7px 13px; padding-left: 10px; border-radius: 4px; border-color: #363636; background-position: right 2px center; background-size: 11px; }
.num { position: relative; display: flex; align-items: center; height: 26px; margin: 0 14px 4px 13px; padding: 0 18px 0 21px; border-radius: 4px; background: #545454; white-space: nowrap; }
.num:last-child { margin-bottom: 0; }
.num span { flex: none; }
.num input { flex: 1; min-width: 0; width: 0; text-align: right; }
.n1 { left: 622px; top: 346px; }
.n2 { left: 865px; top: 346px; }
.n3 { left: 622px; top: 643px; }
.sock { position: absolute; width: 14px; height: 14px; border-radius: 50%; border: 1px solid #0c2b22; background: #00d6a3; left: -7px; top: 50%; margin-top: -7px; }
.out .sock { left: auto; right: -7px; }
.sub .in .sock { left: -8px; }
.sub .out .sock { right: -8px; }
.virt { background: #2e2e2e; border: 2px solid #8a8a8a; }
.num .sock { left: -21px; }
.int { background: #598c5c; }
.num .fl { left: -20px; width: 11px; height: 11px; border-radius: 0; margin: -5px 0 0; transform: rotate(45deg); background: #222; border: 4px solid #a1a1a1; }
.pointer { position: absolute; left: 956px; top: 824px; width: 66px; height: 92px; overflow: visible; }
.canvas .tl { top: 25px; }
.tc { right: 0; top: 25px; }
.nh { left: 12px; right: 50px; bottom: 4px; height: 6px; background: #333; }
.nv { right: 2px; top: 16px; bottom: 14px; width: 7px; background: #ffffff1c; }

/* Outliner */
.outliner { background: #282828; }
.hout { padding-left: 13px; gap: 9px; background: #2b2b2b; overflow: hidden; }
.search { display: flex; align-items: center; flex: none; width: 191px; height: 32px; margin: 0 17px 0 16px; padding-left: 6px; border: 1px solid #3c3c3c; border-radius: 6px; background: #1d1d1d; }
.search input { flex: 1; min-width: 0; }
.tree { position: relative; flex: 1; background: repeating-linear-gradient(#282828 0 33px, #2b2b2b 33px 66px); color: #c8c8c8; }
.tree::before { content: ""; position: absolute; left: 49px; top: 74px; height: 182px; width: 1px; background: #666; }
.tree li { display: flex; align-items: center; height: 33px; padding: 2px 20px 0 0; }
.tree .d1 { padding-left: 33px; }
.tree .d2 { padding-left: 66px; }
.tree .d3 { padding-left: 99px; }
.tree .d5 { padding-left: 165px; }
.tree li.active { position: relative; background: #334f82; color: #f3a656; }
.slot { width: 32px; height: 30px; margin-right: 7px; display: flex; align-items: center; justify-content: center; flex: none; border-radius: 6px; }
.chip { background: #4f4f4f; }
.active .chip { background: #5d6f93; }
.ex { margin-left: 33px; }
.tw { width: 33px; flex: none; display: flex; justify-content: center; }
.tw::before { content: ""; border-left: 10px solid #c8c8c8; border-top: 5px solid transparent; border-bottom: 5px solid transparent; }
.tw.open::before { border: 5px solid transparent; border-top: 10px solid #c8c8c8; border-bottom: 0; }
.clip { overflow: hidden; white-space: nowrap; width: 124px; }
.flags { margin: 0 0 3px auto; display: flex; gap: 10px; align-items: center; color: #e4e4e4; }
.flags .ico { width: 24px; height: 24px; }
.flags input { appearance: none; width: 18px; height: 18px; background: #e4e4e4 url("data:image/svg+xml,%3Csvg xmlns='http://www.w3.org/2000/svg' viewBox='0 0 16 16'%3E%3Cpath d='M3 8l4 4 6-8' fill='none' stroke='%23222' stroke-width='2.500'/%3E%3C/svg%3E"); border-radius: 3px; }
.oh { left: 13px; right: 57px; bottom: 4px; height: 6px; background: #3f3f3f; }

/* Properties */
.hprop { height: 41px; padding: 0 15px; }
.hprop .btn { height: 31px; }
.hprop .search { margin: 0 auto 0 54px; }
.hprop .sq { width: 32px; }
.propbody { flex: 1; display: flex; min-height: 0; }
.tabs { width: 45px; flex: none; background: #1c1c1c; padding-top: 12px; display: flex; flex-direction: column; color: #b0b0b0; }
.tabs button { height: 46px; padding: 0 0 0 9px; margin-left: 2px; border-radius: 6px 0 0 6px; }
.tabs .sp { margin-top: 12px; }
.tabs .on { background: #303030; color: #7fa4f7; }
.tabs .orange { color: #c9844a; }
.tabs .red { color: #b0505c; }
.tabs .blueish { color: #6282c8; }
.content { flex: 1; min-width: 0; padding: 0 15px 0 16px; font-size: 19px; color: #dcdcdc; }
.content .ico { width: 28px; height: 28px; }
.content .s24 { width: 24px; height: 24px; }
.crumbs { display: flex; align-items: center; height: 64px; gap: 14px; padding: 0 2px; }
.crumbs .sep { margin: 0 1px 0 3px; }
.addmod { width: 100%; height: 36px; margin-top: 16px; justify-content: space-between; padding: 0 5px 0 13px; }
.addmod .chev { width: 15px; height: 15px; }
.panel { margin-top: 18px; border: 2px solid #43618f; border-radius: 8px; background: #3b3b3b; padding: 4px 14px 0 12px; }
.prow { display: flex; align-items: center; height: 36px; gap: 9px; margin-bottom: 18px; }
.prow .grp { margin: 0 0 0 15px; }
.panel .grp { height: 36px; border: 0; }
.panel .cell { width: 37px; }
.prow .cell, .prow .drop { width: 36px; }
.panel .idblock .drop { width: 57px; }
.grip { width: 20px; height: 10px; margin-left: auto; color: #999; }
.fold { display: flex; align-items: center; width: 100%; height: 45px; gap: 9px; padding-left: 27px; }
.fold.first { margin-top: 17px; }

.status { height: 33px; flex: none; background: #1c1c1c; display: flex; align-items: center; padding: 0 13px 0 18px; color: #8e8e8e; }
.status span { display: flex; align-items: center; width: 353px; gap: 16px; }
.status svg { width: 20px; height: 25px; }
.status .ver { margin-left: auto; width: auto; }
```
